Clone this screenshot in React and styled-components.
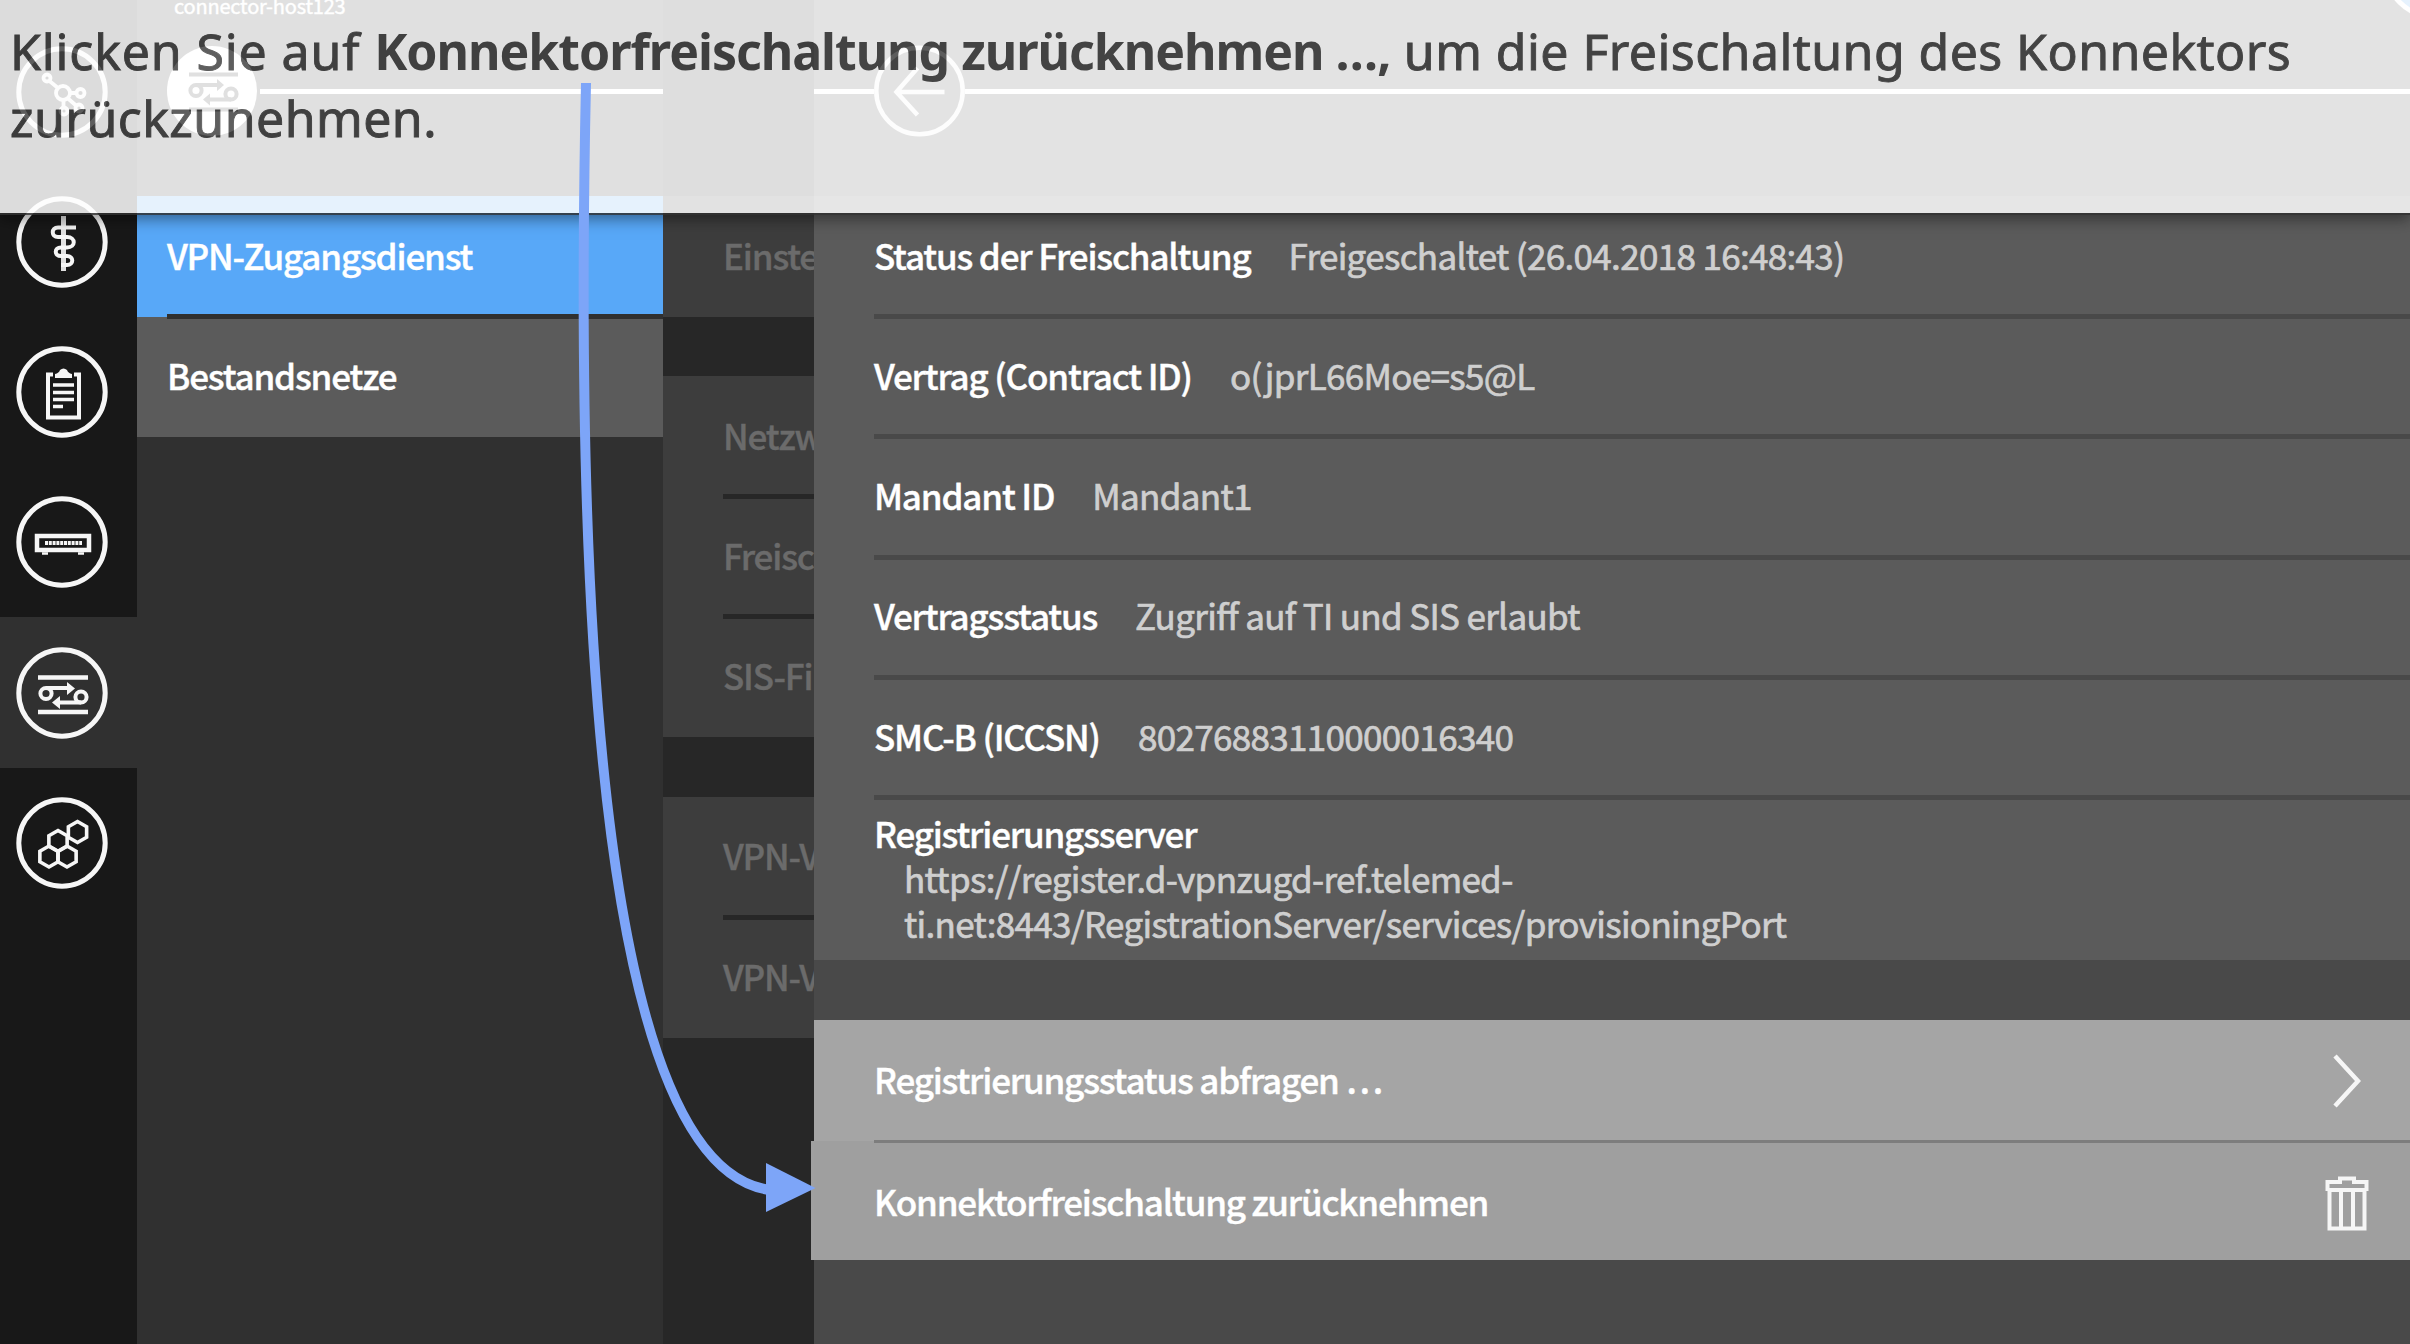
import React from "react";
import styled, { createGlobalStyle, css } from "styled-components";

const Global = createGlobalStyle`
  * { box-sizing: border-box; }
  body { margin: 0; overflow: hidden; background: #303030; }
`;

const Screen = styled.div`
  position: relative;
  width: 2410px;
  height: 1344px;
  overflow: hidden;
  display: grid;
  grid-template-columns: 137px 526px 151px 1596px;
  background: #303030;
  color: #fff;
  font: 500 35px/46px "Noto Sans CJK SC", "Noto Sans", sans-serif;
  font-feature-settings: "liga" 1;
  white-space: nowrap;
`;

const Rail = styled.nav`
  display: flex;
  flex-direction: column;
  padding-top: 16.4px;
  background: #181818;
`;

const RailItem = styled.div`
  height: 150.25px;
  padding-left: 14px;
  display: flex;
  align-items: center;
  background: ${(p) => (p.$active ? "#303030" : "transparent")};
`;

const Icon = styled.svg`
  display: block;
  flex: none;
  width: ${(p) => p.$w || 96}px;
  height: ${(p) => p.$h || 96}px;
  margin-top: ${(p) => p.$drop || 0}px;
  fill: none;
  stroke: #f6f6f6;
  stroke-width: 4.5;
`;

const Column = styled.section`
  display: flex;
  flex-direction: column;
  min-width: 0;
  overflow: hidden;
  background: ${(p) => p.$bg};
`;

const ColumnHeader = styled.header`
  height: 196.4px;
  flex: none;
  display: flex;
  flex-direction: column;
`;

const HostName = styled.div`
  height: 44.7px;
  padding: 0 0 0 37px;
  margin-top: -10.2px;
  font-size: 20px;
  font-weight: 400;
  line-height: 32px;
  letter-spacing: -0.2px;
  -webkit-text-stroke: 0.4px #fff;
`;

const HeaderLine = styled.div`
  display: flex;
  align-items: center;
  height: 96px;
  margin-top: ${(p) => p.$top}px;
  padding-left: ${(p) => p.$pad || 0}px;
`;

const Rule = styled.div`
  height: 5px;
  background: #fff;
  ${(p) => (p.$w ? css`width: ${p.$w}px;` : css`flex: 1;`)}
`;

const Group = styled.div`
  flex: none;
  margin-bottom: ${(p) => p.$gap || 0}px;
  background: ${(p) => p.$bg};
`;

const Row = styled.div`
  height: 120.25px;
  padding-left: ${(p) => p.$pad}px;
  background: ${(p) => p.$bg || "transparent"};
  color: ${(p) => p.$color || "#fff"};
`;

const RowInner = styled.div`
  position: relative;
  height: 100%;
  padding-bottom: 4px;
  display: flex;
  align-items: center;
  gap: 38px;
  ${(p) => p.$line && css`
    &::after {
      content: "";
      position: absolute;
      left: 0;
      right: 0;
      bottom: -2.4px;
      height: 4.8px;
      background: ${p.$line};
    }
  `}
`;

const Label = styled.span`
  letter-spacing: -1.18px;
  padding-bottom: ${(p) => p.$lift || 0}px;
  -webkit-text-stroke: 0.4px currentColor;
`;

const Value = styled.span`
  font-weight: 400;
  letter-spacing: -0.66px;
  color: #cfcfcf;
  -webkit-text-stroke: 0.7px #cfcfcf;
`;

const ServerRow = styled.div`
  height: 162.8px;
  padding: 12.7px 0 0 60px;
  line-height: 45px;
`;

const ServerUrl = styled.div`
  padding-left: 30px;
`;

const Action = styled.div`
  position: relative;
  display: flex;
  align-items: center;
  justify-content: space-between;
  height: ${(p) => p.$h}px;
  padding: 0 ${(p) => p.$right}px 0 60px;
  background: ${(p) => p.$bg};
  ${(p) => p.$line && css`
    &::after {
      content: "";
      position: absolute;
      left: 60px;
      right: 0;
      bottom: -1.5px;
      height: 3px;
      background: #7d7d7d;
      z-index: 1;
    }
  `}
`;

const ActionEdge = styled.div`
  position: absolute;
  left: 811px;
  top: 1141px;
  width: 3px;
  height: 119px;
  background: #a0a0a0;
`;

const Hint = styled.div`
  position: absolute;
  left: 0;
  top: 0;
  width: 2410px;
  height: 215px;
  padding: 18px 10px;
  opacity: 0.85;
  background: #fff;
  border-bottom: 2px solid #303030;
  box-shadow: 0 4px 14px rgba(0, 0, 0, 0.5);
  color: #434343;
  font: 400 50px/67px "Noto Sans", "Open Sans", sans-serif;
`;

const HintText = styled.span`
  letter-spacing: ${(p) => p.$ls}px;
  -webkit-text-stroke: 0.9px #434343;
`;

const Strong = styled.b`
  font-weight: 700;
  letter-spacing: -1.03px;
`;

const Corner = styled.svg`
  position: absolute;
  right: 0;
  top: 0;
`;

const Pointer = styled.svg`
  position: absolute;
  left: 0;
  top: 0;
`;

const Ring = () => <circle cx="48" cy="48" r="43.2" strokeWidth="5" />;

const Exchange = () => (
  <>
    <path d="M24 32.500H74M24 67H74" />
    <circle cx="32" cy="48.500" r="5.600" strokeWidth="4" />
    <circle cx="67" cy="52" r="5.600" strokeWidth="4" />
    <path d="M32 43H54M67 57.500H44" strokeWidth="4" />
    <path d="M53 37L61 43.500L53 50ZM46 51L38 57.500L46 64Z" fill="#f6f6f6" stroke="none" />
  </>
);

const hex = (x, y, r = 10.5) =>
  `M${x} ${y - r}L${x + r * 0.87} ${y - r / 2}V${y + r / 2}L${x} ${y + r}L${x - r * 0.87} ${y + r / 2}V${y - r / 2}Z`;

const railIcons = [
  <g strokeWidth="3.8">
    <circle cx="33" cy="34" r="3.500" />
    <circle cx="49" cy="49" r="7" />
    <circle cx="66.500" cy="49" r="4" />
    <circle cx="65" cy="64" r="3.500" />
    <circle cx="50" cy="67" r="3.500" />
    <path d="M35.500 37L44 44M56 49H62M54 54.500L62 61.500M49.500 56V63" />
  </g>,
  <g>
    <path d="M49.500 22V77" strokeWidth="5" stroke="#e0e0e0" />
    <path d="M62 33.500H44C37 33.500 37 43 44 43H53C62 43 62 53.500 53 53.500H47C40 53.500 40 62 47 62H53C60 62 60 71 53 71H47" strokeWidth="4" />
  </g>,
  <g>
    <path d="M39 30.500H34V73.500H65V30.500H60" strokeWidth="4" />
    <path d="M41 34V30Q45 29 46 26Q49.500 23 53 26Q54 29 58 30V34Z" fill="#f6f6f6" stroke="none" />
    <path d="M39 41H60M39 48.500H60M39 55.500H60M39 62.500H49" strokeWidth="3.6" />
  </g>,
  <g>
    <rect x="23" y="42" width="52" height="14" strokeWidth="4.5" />
    <path d="M31 49H68" strokeWidth="4" strokeDasharray="3 0.8" />
    <path d="M28 59.500H34M64 59.500H70" strokeWidth="2.5" />
  </g>,
  <Exchange />,
  <g strokeWidth="3.6">
    <path d={hex(44, 46)} />
    <path d={hex(35, 61.5)} />
    <path d={hex(53, 61.5)} />
    <path d={hex(63.5, 37)} />
  </g>,
];

const sideGroups = [
  { gap: 59.75, items: ["Einstellungen"] },
  { gap: 60.2, items: ["Netzwerk", "Freischaltung", "SIS-Filter"] },
  { gap: 0, items: ["VPN-Verbindung", "VPN-Verbindung"] },
];

const details = [
  ["Status der Freischaltung", "Freigeschaltet (26.04.2018 16:48:43)"],
  ["Vertrag (Contract ID)", "o(jprL66Moe=s5@L"],
  ["Mandant ID", "Mandant1"],
  ["Vertragsstatus", "Zugriff auf TI und SIS erlaubt"],
  ["SMC-B (ICCSN)", "80276883110000016340"],
];

export default function App() {
  return (
    <>
      <Global />
      <Screen>
        <Rail>
          {railIcons.map((icon, i) => (
            <RailItem key={i} $active={i === 4}>
              <Icon viewBox="0 0 96 96"><Ring />{icon}</Icon>
            </RailItem>
          ))}
        </Rail>

        <Column $bg="#303030">
          <ColumnHeader>
            <HostName>connector-host123</HostName>
            <HeaderLine $top={8.5} $pad={27}>
              <Icon viewBox="0 0 96 96">
                <circle cx="48" cy="48" r="45" fill="#fff" stroke="none" />
                <g stroke="#303030" strokeWidth="4">
                  <path d="M25 31.500H74M25 66.500H74" />
                  <circle cx="32" cy="47.500" r="5.600" />
                  <circle cx="67" cy="51" r="5.600" />
                  <path d="M32 42H54M67 56.500H44" />
                  <path d="M53 36L60 42L53 48ZM46 50.500L39 56.500L46 62.500Z" fill="#303030" stroke="none" />
                </g>
              </Icon>
              <Rule />
            </HeaderLine>
          </ColumnHeader>
          <Group $bg="#5b5b5b">
            <Row $pad={30} $bg="#58a8f8"><RowInner $line="#303030"><Label>VPN-Zugangsdienst</Label></RowInner></Row>
            <Row $pad={30}><RowInner><Label>Bestandsnetze</Label></RowInner></Row>
          </Group>
        </Column>

        <Column $bg="#272727">
          <ColumnHeader />
          {sideGroups.map((g, i) => (
            <Group key={i} $bg="#3d3d3d" $gap={g.gap}>
              {g.items.map((t, j) => (
                <Row key={j} $pad={60} $color="#6b6b6b">
                  <RowInner $line={j < g.items.length - 1 ? "#272727" : null}><Label>{t}</Label></RowInner>
                </Row>
              ))}
            </Group>
          ))}
        </Column>

        <Column $bg="#494949">
          <ColumnHeader>
            <HeaderLine $top={43}>
              <Rule $w={60} />
              <Icon viewBox="2.500 0 91 96" $w={91}>
                <circle cx="48" cy="48" r="43.2" />
                <path d="M73 49H25M46 72L25 49L46 25" />
              </Icon>
              <Rule />
            </HeaderLine>
          </ColumnHeader>
          <Group $bg="#5b5b5b" $gap={60}>
            {details.map(([k, v]) => (
              <Row key={k} $pad={60}>
                <RowInner $line="#494949"><Label>{k}</Label><Value>{v}</Value></RowInner>
              </Row>
            ))}
            <ServerRow>
              <Label>Registrierungsserver</Label>
              <ServerUrl><Value>https://register.d-vpnzugd-ref.telemed-<br />ti.net:8443/RegistrationServer/services/provisioningPort</Value></ServerUrl>
            </ServerRow>
          </Group>
          <Group>
            <Action $h={121} $bg="#a5a5a5" $right={49} $line>
              <Label $lift={4}>Registrierungsstatus abfragen …</Label>
              <Icon viewBox="0 0 28 54" $w={28} $h={54}><path d="M2 2L25 27L2 52" /></Icon>
            </Action>
            <Action $h={119} $bg="#9f9f9f" $right={41}>
              <Label>Konnektorfreischaltung zurücknehmen</Label>
              <Icon viewBox="0 0 44 56" $w={44} $h={56} $drop={6}>
                <path d="M4.500 14V52.500H39.500V14M16 14V52M28 14V52M2.500 15V6H15V2.500H29V6H41.500V15M2.500 14H41.500" strokeWidth="4" />
              </Icon>
            </Action>
          </Group>
        </Column>

        <ActionEdge />
        <Corner width="20" height="20" viewBox="2390 0 20 20">
          <circle cx="2432" cy="-29" r="45" fill="#58a8f8" stroke="#fff" strokeWidth="5" />
        </Corner>
        <Hint>
          <div>
            <HintText $ls={0.87}>Klicken Sie auf </HintText>
            <Strong>Konnektorfreischaltung zurücknehmen …,</Strong>
            <HintText $ls={0.43}> um die Freischaltung des Konnektors</HintText>
          </div>
          <div><HintText $ls={0.45}>zurückzunehmen.</HintText></div>
        </Hint>
        <Pointer width="2410" height="1344" viewBox="0 0 2410 1344">
          <path d="M586 83C570 820 636 1172 770 1190" fill="none" stroke="#7da5f8" strokeWidth="10" />
          <path d="M766 1163L815.500 1188L766 1212Z" fill="#7da5f8" />
        </Pointer>
      </Screen>
    </>
  );
}
